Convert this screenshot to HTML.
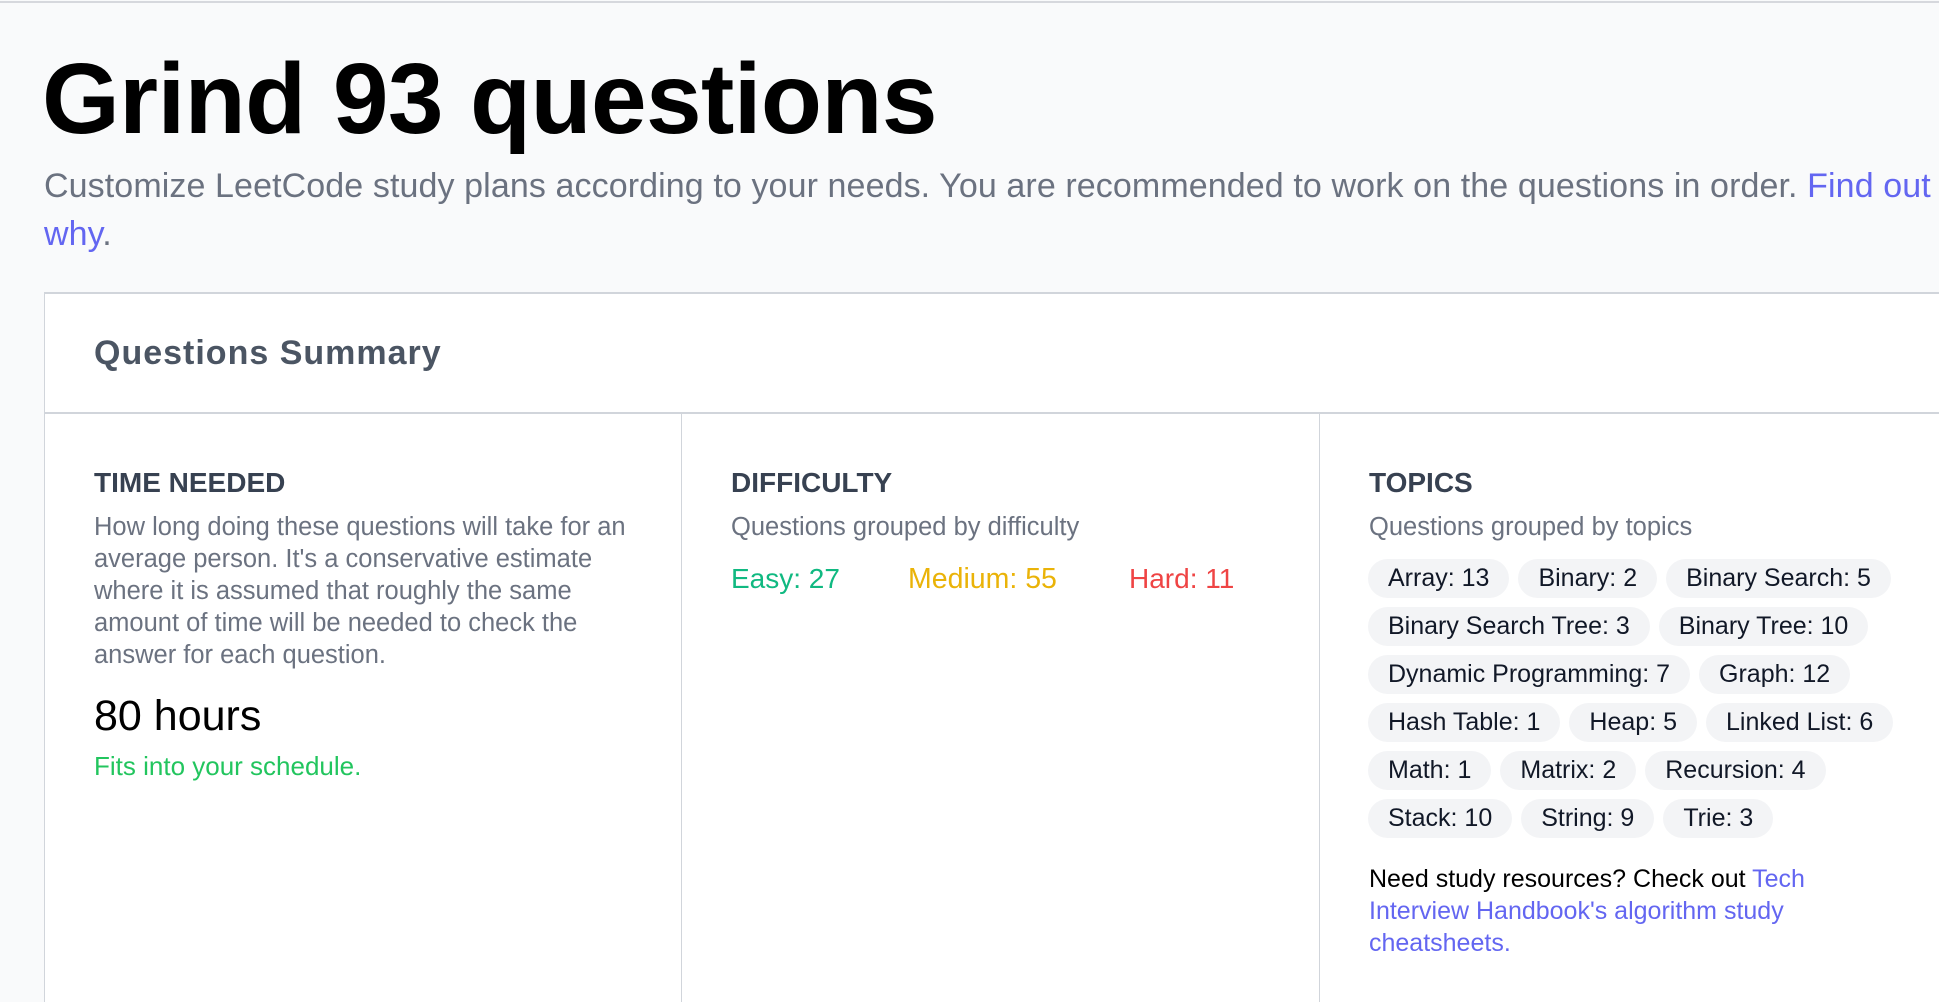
<!DOCTYPE html>
<html><head><meta charset="utf-8"><style>
*{margin:0;padding:0;box-sizing:border-box}
html,body{width:1939px;height:1002px;overflow:hidden;background:#f9fafb;font-family:"Liberation Sans",Arial,sans-serif;position:relative}
.a{position:absolute;white-space:nowrap}
.topline{position:absolute;left:0;top:1px;width:1939px;height:2px;background:#d6d8dd}
.card{position:absolute;left:44px;top:292px;width:1895px;height:710px;background:#fff;border-left:1px solid #d1d5db;border-top:2px solid #d1d5db}
.hr{position:absolute;left:44px;top:412px;width:1895px;height:2px;background:#d1d5db}
.vr{position:absolute;top:413px;width:1px;height:589px;background:#d1d5db}
.h{font-size:28px;font-weight:bold;color:#374151;line-height:32px}
.g{font-size:25.5px;color:#6b7280;line-height:32px}
.pill{display:inline-block;height:39px;line-height:39px;padding:0 20px;border-radius:20px;background:#f3f4f6;font-size:25px;color:#111827;margin-right:9px}
.row{position:absolute;left:1368px}
a{color:#6366f1;text-decoration:none}
</style></head><body>
<div class="topline"></div>
<div class="a" style="left:42px;top:49px;font-size:100px;line-height:100px;font-weight:bold;color:#000;letter-spacing:-0.6px">Grind 93 questions</div>
<div class="a" style="left:44px;top:162px;font-size:34px;line-height:48px;color:#6b7280;letter-spacing:0.1px">Customize LeetCode study plans according to your needs. You are recommended to work on the questions in order. <a>Find out</a><br><a>why</a>.</div>
<div class="card"></div>
<div class="hr"></div>
<div class="vr" style="left:681px"></div>
<div class="vr" style="left:1319px"></div>
<div class="a" style="left:94px;top:333px;font-size:34px;line-height:40px;font-weight:bold;color:#4b5563;letter-spacing:1px">Questions Summary</div>

<div class="a h" style="left:94px;top:467px">TIME NEEDED</div>
<div class="a g" style="left:94px;top:511px">How long doing these questions will take for an<br>average person. It's a conservative estimate<br>where it is assumed that roughly the same<br>amount of time will be needed to check the<br>answer for each question.</div>
<div class="a" style="left:94px;top:691px;font-size:43px;line-height:50px;color:#000">80 hours</div>
<div class="a" style="left:94px;top:750px;font-size:26px;line-height:32px;color:#22c55e">Fits into your schedule.</div>

<div class="a h" style="left:731px;top:467px">DIFFICULTY</div>
<div class="a g" style="left:731px;top:511px">Questions grouped by difficulty</div>
<div class="a" style="left:731px;top:562px;font-size:28px;line-height:34px;color:#10b981">Easy: 27</div>
<div class="a" style="left:908px;top:562px;font-size:28.5px;line-height:34px;color:#eab308">Medium: 55</div>
<div class="a" style="left:1129px;top:562px;font-size:28px;line-height:34px;color:#ef4444">Hard: 11</div>

<div class="a h" style="left:1369px;top:467px">TOPICS</div>
<div class="a g" style="left:1369px;top:511px">Questions grouped by topics</div>
<div class="a row" style="top:559px"><span class="pill">Array: 13</span><span class="pill">Binary: 2</span><span class="pill">Binary Search: 5</span></div>
<div class="a row" style="top:607px"><span class="pill">Binary Search Tree: 3</span><span class="pill">Binary Tree: 10</span></div>
<div class="a row" style="top:655px"><span class="pill">Dynamic Programming: 7</span><span class="pill">Graph: 12</span></div>
<div class="a row" style="top:703px"><span class="pill">Hash Table: 1</span><span class="pill">Heap: 5</span><span class="pill">Linked List: 6</span></div>
<div class="a row" style="top:751px"><span class="pill">Math: 1</span><span class="pill">Matrix: 2</span><span class="pill">Recursion: 4</span></div>
<div class="a row" style="top:799px"><span class="pill">Stack: 10</span><span class="pill">String: 9</span><span class="pill">Trie: 3</span></div>
<div class="a" style="left:1369px;top:863px;font-size:25px;line-height:32px;color:#000">Need study resources? Check out <a>Tech</a><br><a>Interview Handbook's algorithm study</a><br><a>cheatsheets.</a></div>
</body></html>
